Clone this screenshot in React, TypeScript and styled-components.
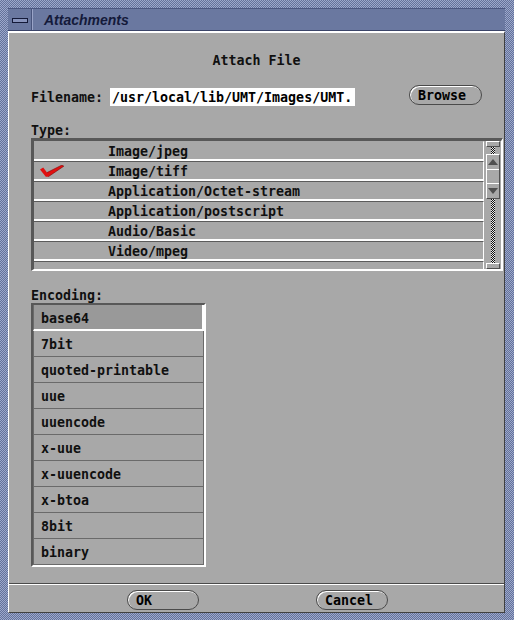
import { FC } from 'react'
import styled, { createGlobalStyle } from 'styled-components'

const TYPES = [
  'Image/jpeg',
  'Image/tiff',
  'Application/Octet-stream',
  'Application/postscript',
  'Audio/Basic',
  'Video/mpeg',
  ''
]

const ENCODINGS = [
  'base64',
  '7bit',
  'quoted-printable',
  'uue',
  'uuencode',
  'x-uue',
  'x-uuencode',
  'x-btoa',
  '8bit',
  'binary'
]

const GlobalStyle = createGlobalStyle`
  html, body {
    margin: 0;
    padding: 0;
    background: #a8a8a8;
  }
  * {
    box-sizing: border-box;
  }
`

const CheckMark: FC = () => (
  <svg width="24" height="12" viewBox="0 0 24 12">
    <path d="M0 4.5 L3.2 2.6 L7 7.6 L22 0 L23.8 1.2 L8.2 11.8 L5.8 11.8 Z" fill="#e01010" />
    <path d="M7 7.6 L22 0 L23.8 1.2 L8.2 11.8" fill="none" stroke="#800808" strokeWidth="0.6" />
  </svg>
)

const Arrow: FC<{ down?: boolean }> = ({ down }) => (
  <svg width="10" height="6" viewBox="0 0 10 6">
    <path d={down ? 'M0 0 L10 0 L5 6 Z' : 'M0 6 L10 6 L5 0 Z'} fill="#505050" />
  </svg>
)

const App: FC = () => {
  const selectedType = 1
  const selectedEncoding = 0

  return (
    <>
      <GlobalStyle />
      <Frame>
        <TitleBar>
          <MinButton>
            <MinGlyph />
          </MinButton>
          <Title>Attachments</Title>
        </TitleBar>
        <Body>
          <Main>
            <Heading>Attach File</Heading>
            <Content>
              <FileRow>
                <Label>Filename:</Label>
                <PathField>/usr/local/lib/UMT/Images/UMT.</PathField>
                <PillButton $width={73} $left={54}>
                  Browse
                </PillButton>
              </FileRow>
              <SectionLabel>Type:</SectionLabel>
              <TypeList>
                <TypeRows>
                  {TYPES.map((type, i) => (
                    <TypeRow key={i}>
                      <MarkCell>{i === selectedType && <CheckMark />}</MarkCell>
                      {type}
                    </TypeRow>
                  ))}
                </TypeRows>
                <ScrollColumn>
                  <ScrollCap />
                  <Track $size={7} />
                  <Thumb>
                    <ThumbPart>
                      <Arrow />
                    </ThumbPart>
                    <ThumbPart />
                    <ThumbPart $last>
                      <Arrow down />
                    </ThumbPart>
                  </Thumb>
                  <Track />
                  <ScrollCap />
                </ScrollColumn>
              </TypeList>
              <SectionLabel>Encoding:</SectionLabel>
              <EncodingList>
                {ENCODINGS.map((enc, i) => (
                  <EncodingRow key={enc} $selected={i === selectedEncoding}>
                    {enc}
                  </EncodingRow>
                ))}
              </EncodingList>
            </Content>
          </Main>
          <Footer>
            <PillButton $width={72} $left={118}>
              OK
            </PillButton>
            <PillButton $width={72} $left={117}>
              Cancel
            </PillButton>
          </Footer>
        </Body>
      </Frame>
    </>
  )
}

const Frame = styled.div`
  width: 514px;
  height: 620px;
  padding: 8px 9px 7px 8px;
  display: flex;
  flex-direction: column;
  background-color: #8290b8;
  background-image: repeating-conic-gradient(#64729a 0 25%, #9ca8cc 0 50%);
  background-size: 2px 2px;
`

const TitleBar = styled.div`
  height: 23px;
  display: flex;
  align-items: center;
  background: #6a78a0;
  border-top: 1px solid #4a5680;
  border-bottom: 1px solid #3a4468;
`

const MinButton = styled.div`
  width: 25px;
  height: 100%;
  display: flex;
  align-items: center;
  justify-content: center;
  border-right: 1px solid #9aa4c8;
  box-shadow: inset -1px 0 0 #48547c;
`

const MinGlyph = styled.div`
  width: 16px;
  height: 5px;
  background: #8894bc;
  border: 1px solid #141a38;
  margin-top: 1px;
`

const Title = styled.div`
  margin-left: 11px;
  margin-top: 1px;
  font-family: 'Liberation Sans', Arial, sans-serif;
  font-size: 14px;
  font-weight: bold;
  font-style: italic;
  color: #141a3a;
`

const Body = styled.div`
  flex: 1;
  display: flex;
  flex-direction: column;
  background: #a8a8a8;
  border-top: 2px solid #ffffff;
  border-left: 1px solid #ffffff;
  border-right: 1px solid #404040;
  border-bottom: 1px solid #404040;
  font-family: 'DejaVu Sans Mono', 'Liberation Mono', monospace;
  font-size: 13.3px;
  font-weight: bold;
  color: #101010;
`

const Main = styled.div`
  flex: 1;
  padding-top: 20px;
`

const Heading = styled.div`
  height: 16px;
  line-height: 16px;
  text-align: center;
`

const Content = styled.div`
  padding-left: 22px;
`

const FileRow = styled.div`
  display: flex;
  align-items: flex-start;
  margin-top: 16px;
`

const Label = styled.div`
  width: 79px;
  margin-top: 3px;
  height: 18px;
  line-height: 19px;
`

const PathField = styled.div`
  width: 245px;
  height: 18px;
  margin-top: 3px;
  padding-left: 2px;
  line-height: 19px;
  background: #ffffff;
  color: #000;
  white-space: nowrap;
  overflow: hidden;
`

const PillButton = styled.div<{ $width: number; $left: number }>`
  width: ${(p) => p.$width}px;
  height: 20px;
  margin-left: ${(p) => p.$left}px;
  display: flex;
  align-items: center;
  padding: 1px 0 0 8px;
  border: 1px solid #4a4a4a;
  border-radius: 10px;
  background: #a8a8a8;
  box-shadow: inset 1px 1px 0 #ffffff;
  line-height: 18px;
  color: #000;
`

const SectionLabel = styled.div`
  margin-top: 16px;
  height: 16px;
  line-height: 17px;
`

const TypeList = styled.div`
  width: 472px;
  display: flex;
  border-top: 3px solid #585858;
  border-left: 3px solid #585858;
  border-right: 2px solid #ffffff;
  border-bottom: 2px solid #ffffff;
`

const TypeRows = styled.div`
  width: 450px;
  height: 128px;
  overflow: hidden;
`

const TypeRow = styled.div`
  height: 20px;
  display: flex;
  align-items: center;
  padding-top: 1px;
  border-top: 1px solid #5c5c5c;
  border-bottom: 2px solid #ffffff;
  border-right: 1px solid #ffffff;
  white-space: nowrap;
  &:first-child {
    border-top-color: #a8a8a8;
  }
`

const MarkCell = styled.div`
  width: 74px;
  height: 100%;
  padding-left: 6px;
  display: flex;
  align-items: center;
`

const ScrollColumn = styled.div`
  width: 17px;
  height: 128px;
  padding-left: 2px;
  display: flex;
  flex-direction: column;
`

const ScrollCap = styled.div`
  width: 14px;
  height: 6px;
  border-top: 1px solid #ffffff;
  border-left: 1px solid #ffffff;
  border-bottom: 1px solid #505050;
  border-right: 1px solid #505050;
`

const Track = styled.div<{ $size?: number }>`
  width: 14px;
  ${(p) => (p.$size ? `height: ${p.$size}px;` : 'flex: 1;')}
  padding: 0 5px;
  background-image: repeating-conic-gradient(#101010 0 25%, #e8e8e8 0 50%);
  background-size: 2px 2px;
  background-clip: content-box;
`

const Thumb = styled.div`
  width: 14px;
  height: 45px;
  display: flex;
  flex-direction: column;
  border-top: 1px solid #ffffff;
  border-left: 1px solid #ffffff;
  border-bottom: 1px solid #505050;
  border-right: 1px solid #505050;
`

const ThumbPart = styled.div<{ $last?: boolean }>`
  flex: 1;
  display: flex;
  align-items: center;
  justify-content: center;
  border-bottom: ${(p) => (p.$last ? 'none' : '1px solid #ffffff')};
`

const EncodingList = styled.div`
  width: 175px;
  border-top: 2px solid #585858;
  border-left: 2px solid #585858;
  border-right: 2px solid #ffffff;
  border-bottom: 2px solid #ffffff;
`

const EncodingRow = styled.div<{ $selected?: boolean }>`
  height: 26px;
  display: flex;
  align-items: center;
  padding: 2px 0 0 7px;
  background: ${(p) => (p.$selected ? '#999999' : '#a8a8a8')};
  border-left: 1px solid #6a6a6a;
  border-right: ${(p) => (p.$selected ? '2px solid #ffffff' : '1px solid #6a6a6a')};
  border-bottom: ${(p) => (p.$selected ? '2px solid #ffffff' : '1px solid #6a6a6a')};
`

const Footer = styled.div`
  height: 29px;
  display: flex;
  align-items: flex-start;
  padding-top: 6px;
  border-top: 1px solid #4a4a4a;
  box-shadow: inset 0 1px 0 #ffffff;
`

export default App
